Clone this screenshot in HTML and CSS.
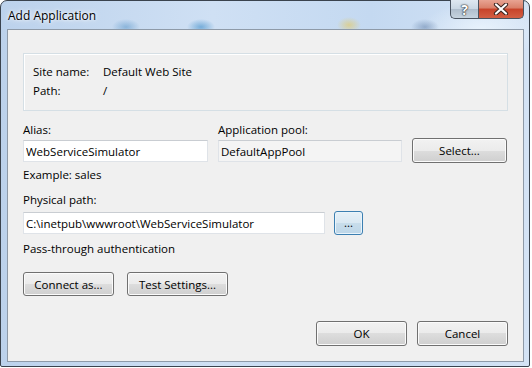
FILE: index.html
```html
<!DOCTYPE html>
<html lang="en">
<head>
    <meta charset="UTF-8">
    <title>Add Application</title>
    <link rel="stylesheet" href="styles.css">
</head>
<body>

    <div class="window">
        <div class="titlebar">
            <span class="title">Add Application</span>
            <div class="caption-buttons">
                <span class="cap help">?</span>
                <span class="cap close">
                    <svg width="16" height="12" viewBox="0 0 16 12">
                        <path d="M3 1.5 L13 10.5 M13 1.5 L3 10.5" stroke="#3b2520" stroke-width="4.2" stroke-linecap="round"/>
                        <path d="M3 1.5 L13 10.5 M13 1.5 L3 10.5" stroke="#fff" stroke-width="2.2" stroke-linecap="round"/>
                    </svg>
                </span>
            </div>
        </div>

        <div class="client">
            <div class="info-box">
                <span class="info-label">Site name:</span><span>Default Web Site</span>
                <span class="info-label">Path:</span><span>/</span>
            </div>

            <div class="alias-row">
                <div class="field alias-field">
                    <label>Alias:</label>
                    <input type="text" class="textbox" value="WebServiceSimulator">
                </div>
                <div class="field pool-field">
                    <label>Application pool:</label>
                    <input type="text" class="textbox readonly" value="DefaultAppPool" readonly>
                </div>
                <button type="button" class="btn select-btn">Select...</button>
            </div>

            <div class="hint">Example: sales</div>

            <label class="path-label">Physical path:</label>
            <div class="path-row">
                <input type="text" class="textbox path-box" value="C:\inetpub\wwwroot\WebServiceSimulator">
                <button type="button" class="btn browse-btn">...</button>
            </div>

            <div class="auth">Pass-through authentication</div>

            <div class="auth-buttons">
                <button type="button" class="btn connect-btn">Connect as...</button>
                <button type="button" class="btn test-btn">Test Settings...</button>
            </div>

            <div class="dialog-buttons">
                <button type="button" class="btn">OK</button>
                <button type="button" class="btn">Cancel</button>
            </div>
        </div>
    </div>

</body>
</html>
```

FILE: styles.css
```css
body {
    margin: 0;
    background: #fff;
    font-family: 'Open Sans', 'Noto Sans', sans-serif;
    font-size: 11.5px;
    color: #000;
}

.window {
    width: 530px;
    height: 367px;
    border: 1px solid #3a434e;
    border-radius: 7px 7px 2px 2px;
    padding: 0 5px 4px 6px;
    display: flex;
    flex-direction: column;
    background:
        radial-gradient(ellipse 14px 8px at 125px 26px, rgba(90, 150, 200, 0.55), transparent),
        radial-gradient(ellipse 14px 8px at 200px 26px, rgba(60, 140, 200, 0.6), transparent),
        radial-gradient(ellipse 12px 8px at 348px 24px, rgba(230, 200, 90, 0.6), transparent),
        radial-gradient(ellipse 14px 8px at 424px 26px, rgba(100, 130, 170, 0.55), transparent),
        radial-gradient(ellipse 60px 30px at 480px 30px, rgba(240, 248, 255, 0.8), transparent),
        linear-gradient(to right, #bcd2ec, #cfe0f4 40%, #c4d9f1 70%, #d4e3f5);
    box-sizing: border-box;
}

.titlebar {
    height: 28px;
    display: flex;
    justify-content: space-between;
    align-items: flex-start;
}

.title {
    margin-top: 6px;
    margin-left: 1px;
    font-size: 12px;
    text-shadow: 0 0 6px #fff, 0 0 3px #fff;
}

.caption-buttons {
    display: flex;
    margin-top: -1px;
}

.cap {
    height: 19px;
    box-sizing: border-box;
    border: 1px solid #4a5461;
    border-top: none;
    display: flex;
    align-items: center;
    justify-content: center;
}

.help {
    width: 28px;
    border-right: none;
    border-radius: 0 0 0 5px;
    background: linear-gradient(#dfe8f1, #c9d7e4 50%, #aebdcc 50%, #c6d3df);
    color: #fff;
    font-weight: bold;
    font-size: 14px;
    text-shadow: 0 0 1px #333, 0 0 1px #333, 0 0 2px #333;
}

.close {
    width: 46px;
    border-radius: 0 0 5px 0;
    background: linear-gradient(#e8a493, #d97f69 45%, #c8432a 50%, #d35f44);
}

.client {
    flex: 1;
    border: 1px solid #8e9aa8;
    background: #f0f0f0;
    padding: 23px 15px 15px 15px;
    display: flex;
    flex-direction: column;
    box-sizing: border-box;
    line-height: 15px;
}

.info-box {
    border: 1px solid #d5dfe5;
    box-shadow: inset 1px 1px 0 #fff;
    height: 58px;
    box-sizing: border-box;
    padding: 10px 9px 0;
    display: grid;
    grid-template-columns: 70px auto;
    grid-auto-rows: 19px;
    align-content: start;
}

.alias-row {
    margin-top: 11px;
    display: flex;
    align-items: flex-end;
    gap: 10px;
}

.field {
    display: flex;
    flex-direction: column;
    gap: 3px;
}

.alias-field {
    width: 185px;
}

.pool-field {
    width: 184px;
}

.textbox {
    height: 22px;
    box-sizing: border-box;
    border: 1px solid #dfe3e8;
    border-top-color: #c9cdd2;
    background: #fff;
    font-family: inherit;
    font-size: 11.5px;
    padding: 0 2px;
    margin: 0;
    outline: none;
}

.readonly {
    background: #f4f4f4;
}

.btn {
    height: 25px;
    box-sizing: border-box;
    border: 1px solid #707070;
    border-radius: 3px;
    background: linear-gradient(#f2f2f2, #ebebeb 50%, #dddddd 50%, #cfcfcf);
    box-shadow: inset 0 0 0 1px #fbfbfb;
    font-family: inherit;
    font-size: 11.5px;
    color: #000;
    padding: 0;
    width: 91px;
}

.select-btn {
    width: 95px;
    margin-bottom: -1px;
}

.hint {
    margin-top: 5px;
}

.path-label {
    margin-top: 10px;
}

.path-row {
    margin-top: 4px;
    display: flex;
    align-items: center;
    gap: 9px;
}

.path-box {
    width: 302px;
}

.browse-btn {
    width: 29px;
    height: 24px;
    border-color: #3c7fb1;
    background: linear-gradient(#e6f0f7, #d9e8f2 50%, #c8ddeb 50%, #bdd6e8);
    box-shadow: inset 0 0 0 1px #e9f4fb;
    line-height: 10px;
}

.auth {
    margin-top: 6px;
}

.auth-buttons {
    margin-top: 16px;
    display: flex;
    gap: 13px;
}

.auth-buttons .btn {
    height: 24px;
}

.test-btn {
    width: 101px;
}

.dialog-buttons {
    margin-top: auto;
    display: flex;
    justify-content: flex-end;
    gap: 10px;
}
```
